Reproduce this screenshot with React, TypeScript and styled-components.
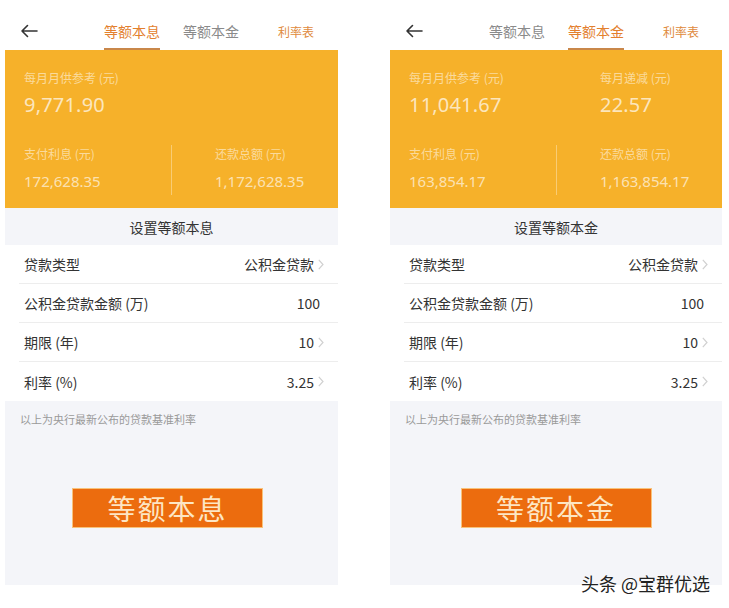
import React from "react";
import styled, { createGlobalStyle } from "styled-components";

const Global = createGlobalStyle`
  html, body { margin: 0; padding: 0; background: #ffffff; }
  body { font-family: "Noto Sans CJK SC", "Noto Sans", sans-serif; }
`;

const Page = styled.div`
  position: relative;
  width: 729px;
  height: 608px;
  display: flex;
  gap: 52px;
  padding-left: 5px;
  box-sizing: border-box;
  overflow: hidden;
`;

const Panel = styled.div<{ $w: number }>`
  width: ${(p) => p.$w}px;
  height: 585px;
  display: flex;
  flex-direction: column;
`;

const Header = styled.div`
  height: 50px;
  display: flex;
  align-items: center;
  padding-left: 15px;
  padding-top: 12px;
  box-sizing: border-box;
  background: #fff;
`;

const Back = styled.svg`
  width: 18px;
  height: 14px;
  flex: none;
  margin-top: -1px;
`;

const Tab = styled.div<{ $active?: boolean; $ml: number }>`
  position: relative;
  margin-left: ${(p) => p.$ml}px;
  height: 38px;
  display: flex;
  align-items: center;
  font-size: 14px;
  color: ${(p) => (p.$active ? "#E3802E" : "#8a8a8a")};
  white-space: nowrap;
  &::after {
    content: "";
    display: ${(p) => (p.$active ? "block" : "none")};
    position: absolute;
    left: 0;
    right: 0;
    bottom: 0;
    height: 2px;
    background: #C9874A;
  }
`;

const RateLink = styled.div<{ $ml: number }>`
  margin-left: ${(p) => p.$ml}px;
  font-size: 12px;
  color: #E08A3C;
  white-space: nowrap;
`;

const Card = styled.div`
  height: 158px;
  background: #F6B12A;
  display: grid;
  grid-template-columns: 167px 1fr;
  grid-template-rows: 70px 1fr;
  box-sizing: border-box;
  padding-top: 19px;
`;

const TopLeft = styled.div`
  display: flex;
  flex-direction: column;
  padding-left: 19px;
`;

const TopRight = styled.div`
  display: flex;
  flex-direction: column;
  padding-left: 43px;
`;

const BottomLeft = styled.div`
  display: flex;
  flex-direction: column;
  padding-left: 19px;
  border-right: 1px solid rgba(255, 255, 255, 0.35);
  margin-top: 6px;
  margin-bottom: 13px;
`;

const BottomRight = styled.div`
  display: flex;
  flex-direction: column;
  padding-left: 43px;
  padding-top: 6px;
`;

const Label = styled.div`
  font-size: 12px;
  line-height: 18px;
  color: rgba(255, 255, 255, 0.55);
  white-space: nowrap;
`;

const BigValue = styled.div`
  font-family: "Noto Sans", "Noto Sans CJK SC", sans-serif;
  font-size: 20px;
  line-height: 26px;
  margin-top: 5px;
  color: rgba(255, 255, 255, 0.7);
  letter-spacing: 0.2px;
`;

const SmallValue = styled.div`
  font-family: "Noto Sans", "Noto Sans CJK SC", sans-serif;
  font-size: 15px;
  line-height: 20px;
  margin-top: 8px;
  color: rgba(255, 255, 255, 0.65);
`;

const SectionTitle = styled.div`
  height: 37px;
  background: #F4F5F9;
  display: flex;
  align-items: center;
  justify-content: center;
  font-size: 14px;
  color: #333;
`;

const List = styled.div`
  background: #fff;
  display: flex;
  flex-direction: column;
`;

const Row = styled.div<{ $last?: boolean }>`
  height: 39px;
  margin-left: 14px;
  padding-left: 5px;
  padding-right: 14px;
  box-sizing: border-box;
  display: flex;
  align-items: center;
  justify-content: space-between;
  border-bottom: ${(p) => (p.$last ? "none" : "1px solid #EDEDED")};
  font-size: 14px;
  color: #333;
`;

const RowValue = styled.div<{ $chev: boolean }>`
  display: flex;
  align-items: center;
  gap: 4px;
  padding-right: ${(p) => (p.$chev ? 0 : 4)}px;
  color: #333;
`;

const Chevron = styled.svg`
  width: 6px;
  height: 11px;
  flex: none;
`;

const Footer = styled.div`
  flex: 1;
  background: #F4F5F9;
  display: flex;
  flex-direction: column;
  align-items: center;
`;

const Note = styled.div`
  align-self: stretch;
  padding-left: 15px;
  padding-top: 10px;
  font-size: 11px;
  line-height: 16px;
  color: #9a9a9a;
`;

const ActionButton = styled.div<{ $shift: number }>`
  margin-top: 61px;
  margin-right: ${(p) => p.$shift}px;
  width: 191px;
  height: 40px;
  box-sizing: border-box;
  background: #EC6C0E;
  border: 1px solid #F8C27A;
  display: flex;
  align-items: center;
  justify-content: center;
  font-size: 28px;
  letter-spacing: 2px;
  color: #FDE6C4;
`;

const Watermark = styled.div`
  position: absolute;
  left: 581px;
  top: 571px;
  font-size: 18px;
  line-height: 24px;
  color: #222;
  white-space: nowrap;
  text-shadow: 0 0 2px #fff, 0 0 2px #fff;
`;

type Item = { label: string; value: string; chev: boolean };

const items: Item[] = [
  { label: "贷款类型", value: "公积金贷款", chev: true },
  { label: "公积金贷款金额 (万)", value: "100", chev: false },
  { label: "期限 (年)", value: "10", chev: true },
  { label: "利率 (%)", value: "3.25", chev: true },
];

type PanelProps = {
  width: number;
  active: 0 | 1;
  title: string;
  monthly: string;
  decrease?: string;
  interest: string;
  total: string;
  button: string;
  buttonShift: number;
};

const ArrowIcon = () => (
  <Back viewBox="0 0 18 14">
    <path d="M17 7H2M7.5 1.5L2 7l5.5 5.5" fill="none" stroke="#333" strokeWidth="1.6" strokeLinecap="round" strokeLinejoin="round" />
  </Back>
);

const ChevronIcon = () => (
  <Chevron viewBox="0 0 6 11">
    <path d="M0.8 0.8L5 5.5 0.8 10.2" fill="none" stroke="#d0d0d0" strokeWidth="1.2" />
  </Chevron>
);

const LoanPanel: React.FC<PanelProps> = (p) => (
  <Panel $w={p.width}>
    <Header>
      <ArrowIcon />
      <Tab $ml={66} $active={p.active === 0}>等额本息</Tab>
      <Tab $ml={23} $active={p.active === 1}>等额本金</Tab>
      <RateLink $ml={39}>利率表</RateLink>
    </Header>
    <Card>
      <TopLeft>
        <Label>每月月供参考 (元)</Label>
        <BigValue>{p.monthly}</BigValue>
      </TopLeft>
      <TopRight>
        {p.decrease && (
          <>
            <Label>每月递减 (元)</Label>
            <BigValue>{p.decrease}</BigValue>
          </>
        )}
      </TopRight>
      <BottomLeft>
        <Label>支付利息 (元)</Label>
        <SmallValue>{p.interest}</SmallValue>
      </BottomLeft>
      <BottomRight>
        <Label>还款总额 (元)</Label>
        <SmallValue>{p.total}</SmallValue>
      </BottomRight>
    </Card>
    <SectionTitle>{p.title}</SectionTitle>
    <List>
      {items.map((it, i) => (
        <Row key={it.label} $last={i === items.length - 1}>
          <span>{it.label}</span>
          <RowValue $chev={it.chev}>
            {it.value}
            {it.chev && <ChevronIcon />}
          </RowValue>
        </Row>
      ))}
    </List>
    <Footer>
      <Note>以上为央行最新公布的贷款基准利率</Note>
      <ActionButton $shift={p.buttonShift}>{p.button}</ActionButton>
    </Footer>
  </Panel>
);

export default function App() {
  return (
    <>
      <Global />
      <Page>
        <LoanPanel
          width={333}
          active={0}
          title="设置等额本息"
          monthly="9,771.90"
          interest="172,628.35"
          total="1,172,628.35"
          button="等额本息"
          buttonShift={8}
        />
        <LoanPanel
          width={332}
          active={1}
          title="设置等额本金"
          monthly="11,041.67"
          decrease="22.57"
          interest="163,854.17"
          total="1,163,854.17"
          button="等额本金"
          buttonShift={0}
        />
        <Watermark>头条 @宝群优选</Watermark>
      </Page>
    </>
  );
}
